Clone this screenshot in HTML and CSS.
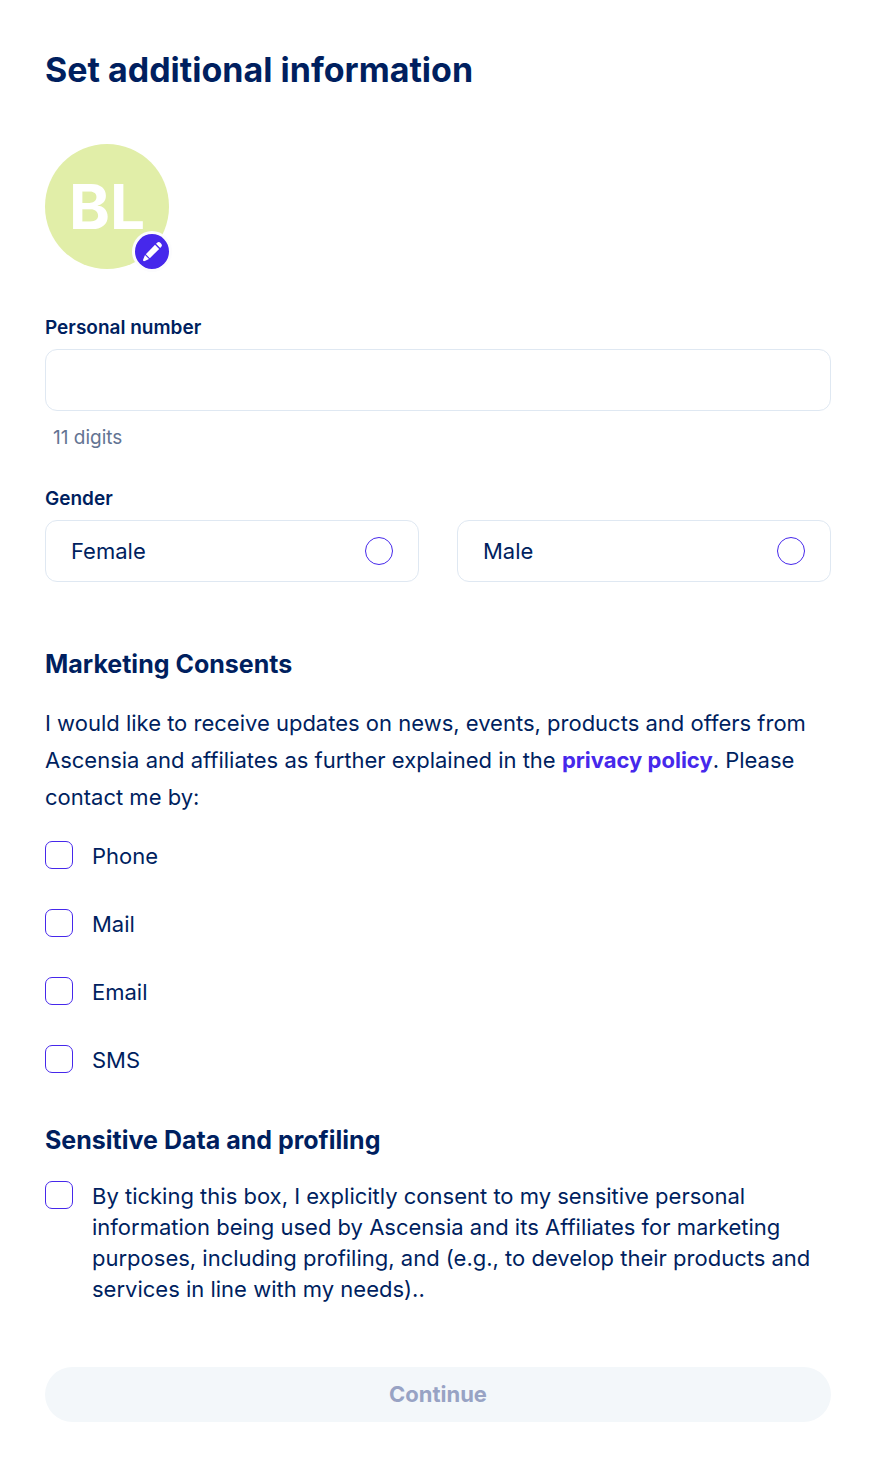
FILE: index.html
```html
<!DOCTYPE html>
<html lang="en">
<head>
  <meta charset="UTF-8" />
  <meta name="viewport" content="width=device-width, initial-scale=1" />
  <title>Set additional information</title>
  <link rel="stylesheet" href="styles.css">
</head>
<body>
  <main class="page">
    <h1 class="title">Set additional information</h1>

    <div class="avatar">
      <span class="initials">BL</span>
      <button class="edit-button" type="button" aria-label="Edit picture">
        <svg viewBox="0 0 20 20" width="20" height="20" fill="#fff" aria-hidden="true">
          <path d="M14 1.8l.9-.8a2.6 2.6 0 0 1 3.7 0l.4.4a2.6 2.6 0 0 1 0 3.7l-.8.9z" />
          <path d="M13 2.8l4.2 4.2L7.8 16.2l-4-4z" />
          <path d="M3 13l4 4-4.2 2c-1.2.5-2.1-.4-1.6-1.6z" />
        </svg>
      </button>
    </div>

    <form class="form">
      <label class="label" for="personal-number">Personal number</label>
      <input class="text-input" type="text" id="personal-number" inputmode="numeric" />
      <p class="hint">11 digits</p>

      <fieldset class="group">
        <legend class="label">Gender</legend>
        <div class="options">
          <label class="option">Female <input class="radio" type="radio" name="gender" value="female" /></label>
          <label class="option">Male <input class="radio" type="radio" name="gender" value="male" /></label>
        </div>
      </fieldset>

      <h2 class="subtitle marketing">Marketing Consents</h2>
      <p class="text">I would like to receive updates on news, events, products and offers from Ascensia and affiliates as further explained in the <a class="link" href="#">privacy policy</a>. Please contact me by:</p>

      <div class="consents">
        <label class="consent"><input class="checkbox" type="checkbox" name="phone" /><span>Phone</span></label>
        <label class="consent"><input class="checkbox" type="checkbox" name="mail" /><span>Mail</span></label>
        <label class="consent"><input class="checkbox" type="checkbox" name="email" /><span>Email</span></label>
        <label class="consent"><input class="checkbox" type="checkbox" name="sms" /><span>SMS</span></label>
      </div>

      <h2 class="subtitle sensitive">Sensitive Data and profiling</h2>
      <label class="consent"><input class="checkbox" type="checkbox" name="sensitive" /><span>By ticking this box, I explicitly consent to my sensitive personal information being used by Ascensia and its Affiliates for marketing purposes, including profiling, and (e.g., to develop their products and services in line with my needs)..</span></label>

      <button class="submit" type="submit" disabled>Continue</button>
    </form>
  </main>
</body>
</html>
```
FILE: styles.css
```css
* {
  box-sizing: border-box;
}
body {
  margin: 0;
  background-color: #fff;
  color: #001f5f;
  font-family: Inter, sans-serif;
  font-size: 22px;
  line-height: 31px;
}
h1, h2, p {
  margin: 0;
}
input, button {
  font-family: inherit;
  font-size: inherit;
  color: inherit;
}
.page {
  padding: 49px 48px 45px 45px;
}
.title {
  font-size: 34px;
  font-weight: 700;
  line-height: 42px;
}

/* Avatar */
.avatar {
  position: relative;
  display: flex;
  align-items: center;
  justify-content: center;
  width: 124px;
  height: 125px;
  margin: 53px 0 47px;
  border-radius: 50%;
  background-color: #e1eea8;
}
.initials {
  color: #fff;
  font-size: 62px;
  font-weight: 700;
}
.edit-button {
  position: absolute;
  right: -3px;
  bottom: -3px;
  display: flex;
  align-items: center;
  justify-content: center;
  width: 40px;
  height: 41px;
  padding: 0;
  border: 3px solid #fcfcfd;
  border-radius: 50%;
  background-color: #4628eb;
  cursor: pointer;
}

/* Fields */
.label {
  display: block;
  padding: 0;
  margin-bottom: 9px;
  font-size: 19px;
  font-weight: 600;
  line-height: 24px;
}
.text-input {
  display: block;
  width: 100%;
  height: 62px;
  padding: 0 25px;
  border: 1px solid #dfe8f2;
  border-radius: 12px;
  background-color: #fff;
}
.hint {
  margin: 15px 0 37px;
  padding-left: 8px;
  color: #637493;
  font-size: 19px;
  line-height: 24px;
}
.group {
  min-width: 0;
  margin: 0;
  padding: 0;
  border: 0;
}
.options {
  display: grid;
  grid-template-columns: 1fr 1fr;
  gap: 38px;
}
.option {
  display: flex;
  align-items: center;
  justify-content: space-between;
  height: 62px;
  padding: 0 25px;
  border: 1px solid #dfe8f2;
  border-radius: 12px;
  cursor: pointer;
}
.radio, .checkbox {
  appearance: none;
  flex: none;
  width: 28px;
  height: 28px;
  margin: 0;
  border: 1px solid #4628eb;
  background-color: #fff;
  cursor: pointer;
}
.radio {
  border-radius: 50%;
}
.checkbox {
  border-radius: 7px;
}
.radio:checked, .checkbox:checked {
  background-color: #4628eb;
  box-shadow: inset 0 0 0 5px #fff;
}

/* Consents */
.subtitle {
  font-size: 25px;
  font-weight: 700;
  line-height: 32px;
}
.marketing {
  margin: 66px 0 25px;
}
.sensitive {
  margin: 48px 0 25px;
}
.text {
  line-height: 37px;
}
.link {
  color: #4628eb;
  font-weight: 700;
  text-decoration: none;
}
.consents {
  display: flex;
  flex-direction: column;
  gap: 37px;
  margin-top: 25px;
}
.consent {
  display: flex;
  align-items: flex-start;
  gap: 19px;
  cursor: pointer;
}

.submit {
  display: block;
  width: 100%;
  height: 55px;
  margin-top: 62px;
  padding: 0 0 2px;
  border: 0;
  border-radius: 28px;
  background-color: #f3f7fa;
  color: #98a3c4;
  font-weight: 700;
}
```
